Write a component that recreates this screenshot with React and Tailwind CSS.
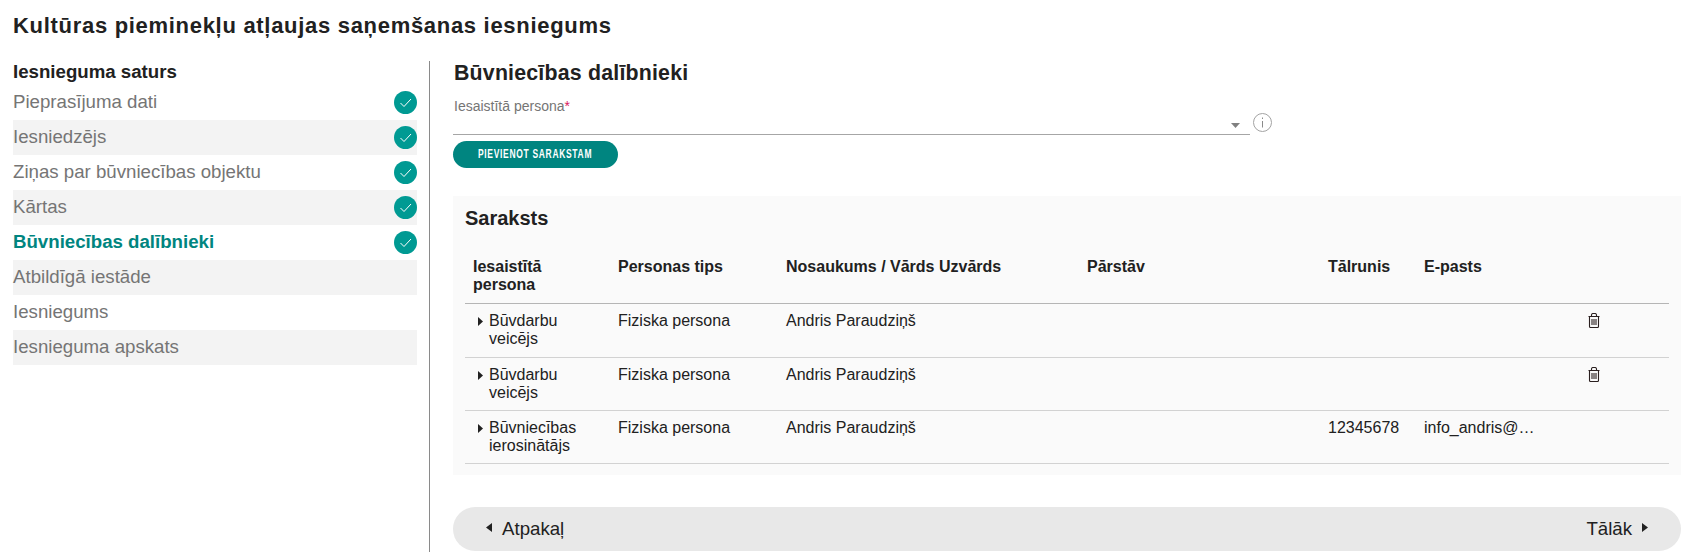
const steps = [
  { label: 'Pieprasījuma dati', done: true },
  { label: 'Iesniedzējs', done: true },
  { label: 'Ziņas par būvniecības objektu', done: true },
  { label: 'Kārtas', done: true },
  { label: 'Būvniecības dalībnieki', done: true, active: true },
  { label: 'Atbildīgā iestāde' },
  { label: 'Iesniegums' },
  { label: 'Iesnieguma apskats' },
]

const rows = [
  { role: ['Būvdarbu', 'veicējs'], canDelete: true },
  { role: ['Būvdarbu', 'veicējs'], canDelete: true },
  { role: ['Būvniecības', 'ierosinātājs'], phone: '12345678', email: 'info_andris@…' },
]

function Check() {
  return (
    <span className="flex h-[23px] w-[23px] items-center justify-center rounded-full bg-[#009a93]">
      <svg width="13" height="13" viewBox="0 0 13 13" fill="none" stroke="#fff" strokeWidth="1">
        <path d="M1.5 7l3.5 3.5 7-7.5" />
      </svg>
    </span>
  )
}

function Caret({ dir = 'right', width = 6 }) {
  return (
    <svg width={width} height="9" viewBox="0 0 6 9" preserveAspectRatio="none" fill="currentColor">
      <path d={dir === 'right' ? 'M0 0l6 4.5L0 9z' : 'M6 0L0 4.5 6 9z'} />
    </svg>
  )
}

function Trash() {
  return (
    <svg width="12" height="15" viewBox="0 0 12 15" fill="none" stroke="#2a1f1f" strokeWidth="1.1">
      <path d="M.5 3.5h11M1.5 3.5v10a1 1 0 001 1h7a1 1 0 001-1v-10M3.5 3.5V2a1.5 1.5 0 011.5-1.5h2A1.5 1.5 0 018.5 2v1.5M4 6v6M6 6v6M8 6v6" />
    </svg>
  )
}

function InfoIcon() {
  return (
    <svg width="19" height="19" viewBox="0 0 19 19" fill="none" stroke="#a3a3a3" strokeWidth="1">
      <circle cx="9.5" cy="9.5" r="9" />
      <path d="M9.5 8v6.5M9.5 4.5v1.5" stroke="#8a8a8a" />
    </svg>
  )
}

export default function App() {
  return (
    <div className="h-[556px] w-[1687px] overflow-hidden bg-white font-['Liberation_Sans',Arial,sans-serif] text-[#212121]">
      <h1 className="pl-[13px] pt-[13px] text-[22px] leading-[26px] font-bold tracking-[0.7px]">
        Kultūras pieminekļu atļaujas saņemšanas iesniegums
      </h1>
      <div className="mt-[22px] flex">
        <aside className="h-[491px] w-[430px] shrink-0 border-r border-[#8a8a8a] pl-[13px] pr-[12px]">
          <h2 className="mb-[2px] text-[18.67px] leading-[22px] font-bold">Iesnieguma saturs</h2>
          <ul>
            {steps.map((s) => (
              <li
                key={s.label}
                className={`flex h-[35px] items-center justify-between text-[18.67px] even:bg-[#f3f3f3] ${
                  s.active ? 'font-bold text-[#008580]' : 'text-[#757575]'
                }`}
              >
                <span className="mb-[2px]">{s.label}</span>
                {s.done && <Check />}
              </li>
            ))}
          </ul>
        </aside>
        <main className="ml-[23px] w-[1228px]">
          <h2 className="pl-[1px] text-[21.33px] leading-[24px] font-bold tracking-[0.2px]">Būvniecības dalībnieki</h2>
          <div className="mt-[11px] flex items-end">
            <div className="relative h-[39px] w-[797px] border-b border-[#a6a6a6] pl-[1px] pt-[2px] text-[14px] leading-[16px] text-[#757575]">
              Iesaistītā persona<span className="text-[#d81b60]">*</span>
              <svg className="absolute right-[10px] bottom-[6px]" width="9" height="5" viewBox="0 0 9 5" fill="#808080">
                <path d="M0 0h9L4.5 5z" />
              </svg>
            </div>
            <span className="mb-[3px] ml-[3px]"><InfoIcon /></span>
          </div>
          <button className="mt-[6px] flex h-[27px] w-[165px] items-center justify-center rounded-full bg-[#008580] text-[12.5px] font-bold tracking-[1px] text-white">
            <span className="inline-block shrink-0 scale-x-[0.68] whitespace-nowrap">PIEVIENOT SARAKSTAM</span>
          </button>
          <section className="mt-[28px] h-[279px] bg-[#fafafa] px-[12px] pt-[11px]">
            <h3 className="text-[20px] leading-[22px] font-bold">Saraksts</h3>
            <table className="mt-[29px] w-[1204px] table-fixed border-collapse text-[16px] leading-[18px]">
              <colgroup>
                <col className="w-[153px]" />
                <col className="w-[168px]" />
                <col className="w-[301px]" />
                <col className="w-[241px]" />
                <col className="w-[96px]" />
                <col className="w-[164px]" />
                <col />
              </colgroup>
              <thead>
                <tr className="h-[45px] border-b border-[#b5b5b5] text-left align-top">
                  <th className="pl-[8px] pr-[24px] font-bold">Iesaistītā persona</th>
                  <th className="font-bold">Personas tips</th>
                  <th className="font-bold">Nosaukums / Vārds Uzvārds</th>
                  <th className="font-bold">Pārstāv</th>
                  <th className="font-bold">Tālrunis</th>
                  <th className="font-bold">E-pasts</th>
                  <th />
                </tr>
              </thead>
              <tbody>
                {rows.map((r, i) => (
                  <tr key={i} className="h-[53px] border-b border-[#d2d2d2] align-top first:h-[54px]">
                    <td className="pl-[13px] pt-[8px]">
                      <div className="flex gap-[6px]">
                        <span className="pt-[5px]"><Caret width={5} /></span>
                        <span>{r.role[0]}<br />{r.role[1]}</span>
                      </div>
                    </td>
                    <td className="pt-[8px]">Fiziska persona</td>
                    <td className="pt-[8px]">Andris Paraudziņš</td>
                    <td />
                    <td className="pt-[8px]">{r.phone}</td>
                    <td className="pt-[8px]">{r.email}</td>
                    <td className="pt-[9px]">{r.canDelete && <Trash />}</td>
                  </tr>
                ))}
              </tbody>
            </table>
          </section>
          <nav className="mt-[32px] flex h-[44px] items-center justify-between rounded-full bg-[#e8e8e8] px-[33px] text-[18.67px]">
            <span className="flex items-center gap-[10px]"><span className="mb-[3px]"><Caret dir="left" /></span>Atpakaļ</span>
            <span className="flex items-center gap-[10px]">Tālāk<span className="mb-[3px]"><Caret /></span></span>
          </nav>
        </main>
      </div>
    </div>
  )
}
